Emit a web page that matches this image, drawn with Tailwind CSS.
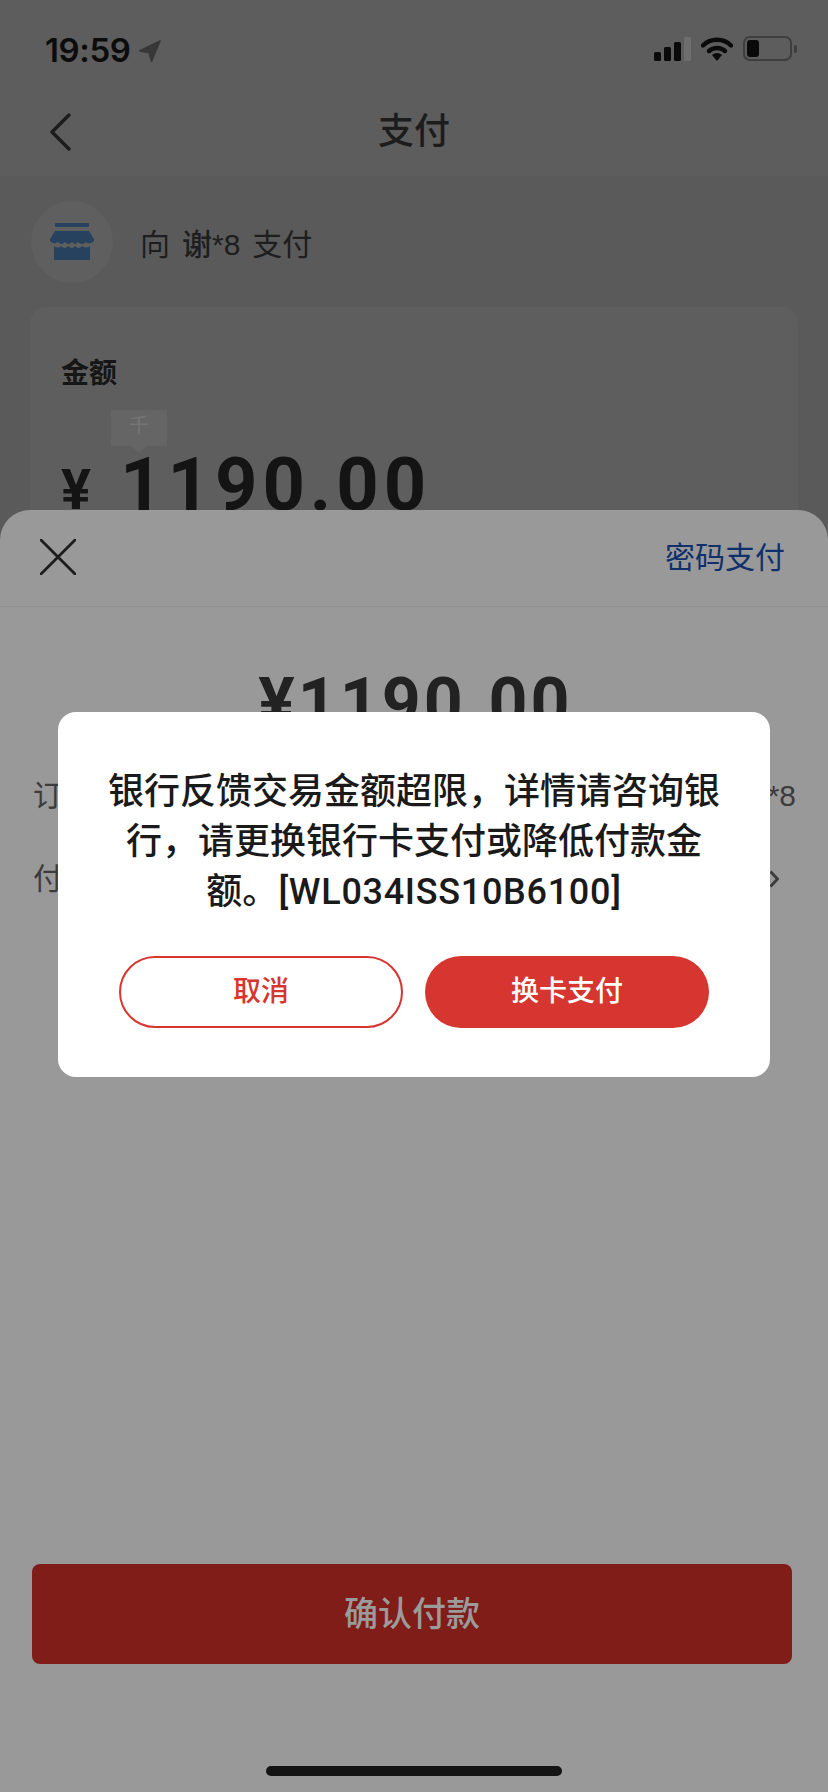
<!DOCTYPE html>
<html lang="zh-CN">
<head>
  <meta charset="utf-8">
  <meta name="viewport" content="width=device-width, initial-scale=1.0">
  <title>支付</title>
  <script src="https://cdn.jsdelivr.net/npm/@tailwindcss/browser@4"></script>
</head>
<body class="bg-[#5a5a5a]">
  <div class="relative w-[828px] h-[1792px] overflow-hidden bg-[#5a5a5a] text-[#1c1c1c] font-['Liberation_Sans','Noto_Sans_CJK_SC',sans-serif]">
    <!-- Page behind the sheet -->
    <header class="h-[176px] bg-[#5d5d5d]">
      <div class="flex items-start justify-between pl-[45px] pr-[31px] pt-[31px] h-[80px]">
        <div class="flex items-center gap-[9px]">
          <span class="font-['Inter',sans-serif] font-semibold text-[33px] leading-[38px] tracking-[-0.4px] text-[#0c0c0c]">19:59</span>
          <svg class="w-[22px] h-[22px] mt-[2px]" viewBox="0 0 22 22"><path d="M21 1 L0.5 11 L10 12.5 L12.5 21.5 Z" fill="#383838" stroke="#383838" stroke-width="1.5" stroke-linejoin="round"/></svg>
        </div>
        <div class="flex items-center gap-[10px] pt-[5px]">
          <svg class="w-[37px] h-[24px]" viewBox="0 0 37 24">
            <rect x="0" y="15" width="7" height="9" rx="1.5" fill="#0a0a0a"/>
            <rect x="10" y="10" width="7" height="14" rx="1.5" fill="#0a0a0a"/>
            <rect x="20" y="5" width="7" height="19" rx="1.5" fill="#0a0a0a"/>
            <rect x="30" y="0" width="7" height="24" rx="1.5" fill="#6e6e6e"/>
          </svg>
          <svg class="w-[32px] h-[24px]" viewBox="0 0 32 24">
            <path d="M2 8.5 A20 20 0 0 1 30 8.5" fill="none" stroke="#0a0a0a" stroke-width="4.4" stroke-linecap="round"/>
            <path d="M8 14 A12 12 0 0 1 24 14" fill="none" stroke="#0a0a0a" stroke-width="4.4" stroke-linecap="round"/>
            <path d="M11 18 A7 7 0 0 1 21 18 L16 24 Z" fill="#0a0a0a"/>
          </svg>
          <div class="flex items-center gap-[2px]">
            <div class="w-[49px] h-[25px] rounded-[7px] border-2 border-[#3e3e3e] p-[2px]">
              <div class="w-[12px] h-full rounded-[3px] bg-[#0a0a0a]"></div>
            </div>
            <div class="w-[3px] h-[8px] rounded-r-[2px] bg-[#3e3e3e]"></div>
          </div>
        </div>
      </div>
      <div class="relative flex items-center justify-center h-[72px] mt-[16px]">
        <svg class="absolute left-[49px] top-[17px] w-[22px] h-[38px]" viewBox="0 0 22 38"><path d="M20 2 L3 19 L20 36" fill="none" stroke="#1c1c1c" stroke-width="3.4" stroke-linecap="round" stroke-linejoin="round"/></svg>
        <h1 class="text-[36px] leading-[44px] font-medium">支付</h1>
      </div>
    </header>

    <section class="flex items-center gap-[27px] pl-[31px] mt-[24px] h-[83px]">
      <div class="w-[82px] h-[82px] rounded-full bg-[#5f5f5f] flex items-center justify-center">
        <svg class="w-[44px] h-[38px]" viewBox="0 0 44 38">
          <rect x="5" y="0" width="34" height="4" rx="1" fill="#27425f"/>
          <path d="M5 8 H39 L44 16 V18 Q40 22 36 19 Q32 23 28 19 Q25 23 22 19 Q18 23 15 19 Q11 23 8 19 Q4 22 0 18 V16 Z" fill="#27425f"/>
          <path d="M4 23 Q8 26 11 23 Q15 27 18 23 Q22 27 25 23 Q29 27 32 23 Q36 26 40 23 V37 H4 Z" fill="#27425f"/>
        </svg>
      </div>
      <p class="flex gap-[12px] pt-[7px] text-[30px] leading-[36px] text-[#1e1e1e]"><span>向</span><span class="font-medium">谢*8</span><span>支付</span></p>
    </section>

    <section class="mt-[24px] mx-[30px] h-[400px] rounded-[16px] bg-[#5e5e5e] pl-[31px] pt-[47px]">
      <p class="text-[28px] leading-[40px] font-semibold text-[#161616]">金额</p>
      <div class="relative mt-[16px] flex items-end gap-[29px]">
        <div class="absolute left-[50px] top-0 w-[56px] h-[36px] bg-[#656565] flex justify-center">
          <span class="text-[20px] leading-[32px] text-[#757575]">千</span>
          <div class="absolute left-[20px] top-[36px] w-0 h-0 border-x-[8px] border-x-transparent border-t-[7px] border-t-[#656565]"></div>
        </div>
        <span class="pt-[32px] font-['Roboto',sans-serif] text-[56px] leading-[76px] font-bold text-[#141414]">¥</span>
        <span class="pt-[32px] font-['Roboto',sans-serif] text-[74px] leading-[86px] font-bold tracking-[5px] text-[#141414]">1190.00</span>
      </div>
    </section>

    <!-- Bottom sheet -->
    <div class="absolute left-0 right-0 top-[510px] bottom-0 rounded-t-[30px] bg-[#999999]">
      <div class="flex items-center justify-between h-[97px] pl-[40px] pr-[43px] border-b border-[#919191]">
        <svg class="w-[36px] h-[36px] -mt-[2px]" viewBox="0 0 36 36"><path d="M1 1 L35 35 M35 1 L1 35" fill="none" stroke="#1c1c1c" stroke-width="2.8" stroke-linecap="round"/></svg>
        <span class="text-[30px] leading-[40px] text-[#10306b]">密码支付</span>
      </div>
      <div class="flex justify-center pt-[56px] pl-[3px] h-[156px]">
        <span class="font-['Roboto',sans-serif] text-[68px] leading-[80px] font-bold tracking-[3px] text-[#222222]">¥1190.00</span>
      </div>
      <div class="flex items-center justify-between h-[60px] mt-[2px] pl-[33px] pr-[32px] text-[30px] text-[#3c3c3c]">
        <span>订单</span>
        <span>谢*8</span>
      </div>
      <div class="flex items-center justify-between h-[60px] mt-[23px] pl-[33px] pr-[49px] text-[30px] text-[#3c3c3c]">
        <span>付款</span>
        <svg class="w-[10px] h-[18px] mt-[2px]" viewBox="0 0 10 18"><path d="M1.5 1.5 L8.5 9 L1.5 16.5" fill="none" stroke="#3c3c3c" stroke-width="2.8"/></svg>
      </div>

      <button class="absolute left-[32px] right-[36px] top-[1054px] h-[100px] rounded-[8px] bg-[#801d19] text-[34px] font-medium text-[#9b9b9b]">确认付款</button>
      <div class="absolute left-[266px] top-[1256px] w-[296px] h-[10px] rounded-full bg-[#141414]"></div>
    </div>

    <!-- Alert dialog -->
    <div class="absolute left-[58px] top-[712px] w-[712px] h-[365px] rounded-[18px] bg-white px-[48px] pt-[55px]">
      <p class="text-center text-[36px] leading-[50px] font-medium text-[#1a1a1a]">银行反馈交易金额超限，详情请咨询银<br>行，请更换银行卡支付或降低付款金<br>额。<span class="font-['Roboto',sans-serif] tracking-[0.7px]">[WL034ISS10B6100]</span></p>
      <div class="flex justify-center gap-[22px] mt-[39px]">
        <button class="w-[284px] h-[72px] rounded-full border-2 border-[#d63530] text-[28px] font-medium text-[#d63530]">取消</button>
        <button class="w-[284px] h-[72px] rounded-full bg-[#d63530] text-[28px] font-medium text-white">换卡支付</button>
      </div>
    </div>
  </div>
</body>
</html>
